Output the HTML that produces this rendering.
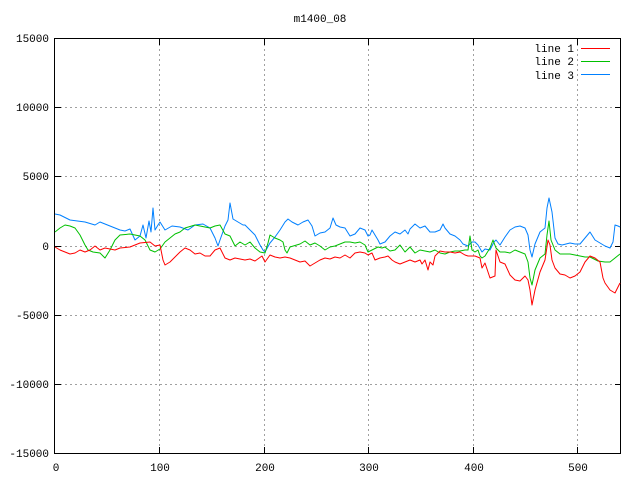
<!DOCTYPE html>
<html><head><style>
html,body{margin:0;padding:0;background:#fff;}
svg text{font-family:"Liberation Mono","DejaVu Sans Mono",monospace;font-size:11px;fill:#000;}
</style></head><body>
<svg width="640" height="480" xmlns="http://www.w3.org/2000/svg" shape-rendering="crispEdges">
<g stroke="#a0a0a0" stroke-dasharray="2,3" stroke-width="1">
<line x1="55" y1="107.5" x2="621" y2="107.5"/>
<line x1="55" y1="176.5" x2="621" y2="176.5"/>
<line x1="55" y1="246.5" x2="621" y2="246.5"/>
<line x1="55" y1="315.5" x2="621" y2="315.5"/>
<line x1="55" y1="384.5" x2="621" y2="384.5"/>
<line x1="159.5" y1="39" x2="159.5" y2="453"/>
<line x1="264.5" y1="39" x2="264.5" y2="453"/>
<line x1="368.5" y1="39" x2="368.5" y2="453"/>
<line x1="473.5" y1="39" x2="473.5" y2="453"/>
<line x1="577.5" y1="39" x2="577.5" y2="453"/>
</g>
<g stroke="#000" stroke-width="1">
<rect x="54.5" y="38.5" width="566" height="415" fill="none"/>
<path d="M55 107.5h6M55 176.5h6M55 246.5h6M55 315.5h6M55 384.5h6M621 107.5h-6M621 176.5h-6M621 246.5h-6M621 315.5h-6M621 384.5h-6M159.5 453v-6M264.5 453v-6M368.5 453v-6M473.5 453v-6M577.5 453v-6M159.5 39v6M264.5 39v6M368.5 39v6M473.5 39v6M577.5 39v6"/>
</g>
<g text-anchor="end">
<text x="49" y="42">15000</text><text x="49" y="111">10000</text><text x="49" y="180">5000</text><text x="49" y="250">0</text>
<text x="49" y="319">-5000</text><text x="49" y="388">-10000</text><text x="49" y="457">-15000</text>
</g>
<g text-anchor="middle">
<text x="56" y="471">0</text><text x="160" y="471">100</text><text x="265" y="471">200</text><text x="369" y="471">300</text><text x="474" y="471">400</text><text x="578" y="471">500</text>
<text x="320" y="22">m1400_08</text>
</g>
<g text-anchor="end">
<text x="574" y="52">line 1</text><text x="574" y="65">line 2</text><text x="574" y="79">line 3</text>
</g>
<g fill="none" stroke-width="1" shape-rendering="auto" stroke-linejoin="round">
<line x1="581" y1="48.5" x2="610" y2="48.5" stroke="#ff0000"/>
<line x1="581" y1="61.5" x2="610" y2="61.5" stroke="#00c000"/>
<line x1="581" y1="74.5" x2="610" y2="74.5" stroke="#0080ff"/>
<polyline stroke="#0080ff" points="55,214 60,215 70,220 85,222 95,225 100,222 110,226 120,230 125,231 130,229 135,240 140,236 143,225 146,238 149,221 151,232 153,208 155,230 158,225 160,222 165,230 172,226 180,227 188,230 195,225 203,224 210,228 215,238 218,246 220,240 225,226 228,220 230,203 233,219 238,222 243,225 245,225 250,230 255,235 260,245 263,250 265,252 270,243 275,237 280,230 285,222 288,219 292,222 298,225 303,222 308,220 312,226 315,236 320,233 325,232 330,228 333,218 336,225 340,227 345,228 350,236 355,234 360,228 365,230 368,236 370,235 372,230 375,235 378,240 380,244 385,242 390,236 395,232 400,234 405,230 408,234 410,229 415,224 420,228 425,226 430,232 435,232 440,230 443,224 445,228 450,234 455,236 460,240 463,244 468,246 472,242 475,242 478,245 482,252 485,249 490,250 494,242 496,240 500,245 505,237 510,230 515,227 520,226 525,228 528,235 530,250 532,257 535,244 540,232 545,228 547,208 549,198 552,212 555,238 558,244 562,245 570,243 575,244 580,244 585,238 590,232 595,240 600,243 605,246 610,248 613,242 615,225 618,226 620,227"/>
<polyline stroke="#00c000" points="55,232 60,228 65,225 70,226 75,228 80,235 85,245 88,250 93,252 100,253 105,258 110,250 115,240 120,235 130,234 140,236 145,240 150,250 155,252 160,249 165,242 170,238 175,234 180,232 185,228 195,225 200,226 210,228 215,226 220,225 225,234 230,236 235,246 240,242 245,245 250,242 255,248 260,252 265,253 268,243 270,235 275,238 280,240 283,242 285,250 287,253 290,247 300,244 305,241 310,245 315,243 320,246 325,250 330,247 335,246 340,244 345,242 350,242 355,243 360,242 365,245 368,252 372,250 378,247 382,248 385,247 390,251 395,250 400,245 405,252 410,247 415,253 420,250 425,251 430,252 435,250 440,253 445,254 450,252 455,251 460,251 465,250 468,250 470,236 472,250 475,252 478,250 480,256 482,258 485,256 490,248 493,240 496,248 500,252 505,252 510,253 515,250 520,252 525,254 528,262 530,278 532,285 535,270 540,258 545,254 547,235 549,221 551,240 555,250 560,254 565,254 570,254 575,255 580,256 585,257 590,257 598,261 605,262 610,262 615,258 620,254"/>
<polyline stroke="#ff0000" points="55,247 60,250 65,252 70,254 75,253 80,250 85,252 90,250 95,246 100,250 105,248 110,249 115,250 120,248 130,247 140,243 150,242 155,246 160,245 163,260 165,265 170,262 180,252 185,248 190,250 195,254 200,253 205,256 210,256 215,250 220,248 225,258 230,260 235,258 240,259 245,260 250,259 255,261 262,256 265,262 270,255 275,257 280,258 285,257 290,258 295,260 300,262 305,261 310,266 315,263 320,260 325,258 330,259 335,257 340,258 345,255 350,258 355,253 360,252 365,253 368,255 372,253 375,260 380,258 385,257 388,256 392,260 395,262 400,264 405,262 410,260 415,262 420,260 422,264 425,260 428,270 430,262 433,265 435,256 440,251 445,252 450,252 455,253 460,252 465,255 468,256 475,256 480,258 482,268 485,263 490,278 495,276 496,250 500,262 505,264 510,275 515,280 520,281 525,276 528,280 530,290 532,305 535,290 540,272 545,260 548,240 550,245 552,260 555,268 560,274 565,275 570,278 575,276 580,272 585,262 590,256 595,258 600,262 603,278 605,283 610,290 615,293 620,283"/>
</g>
</svg>
</body></html>
